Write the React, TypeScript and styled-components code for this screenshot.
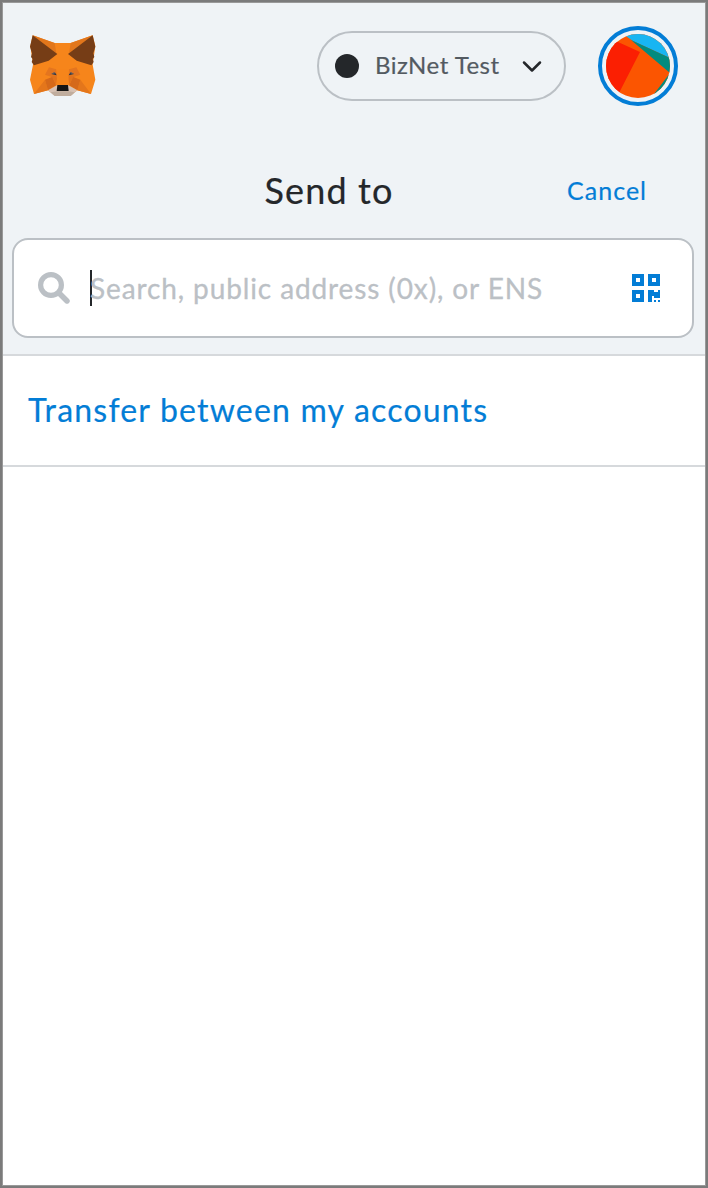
import React from "react";
import styled, { createGlobalStyle } from "styled-components";

const GlobalStyle = createGlobalStyle`
  * { box-sizing: border-box; }
  body { margin: 0; background: #fff; font-family: Lato, "Open Sans", sans-serif; }
  button { font: inherit; background: none; border: 0; padding: 0; margin: 0; cursor: pointer; }
`;

const Popup = styled.div`
  height: 1188px;
  border: 2px solid #7b7b7b;
  background: #fff;
  display: flex;
`;

const Screen = styled.main`
  flex: 1;
  border: 1px solid #999;
  display: flex;
  flex-direction: column;
`;

const Top = styled.header`
  height: 353px;
  background: #eff3f6;
  border-bottom: 2px solid #d6d9dc;
`;

const AppBar = styled.div`
  height: 126px;
  padding: 0 27px 0 17px;
  display: flex;
  align-items: center;
`;

const Logo = styled.svg`
  width: 86px;
  height: 80px;
  margin-right: auto;
`;

const Network = styled.button`
  width: 249px;
  height: 70px;
  border: 2px solid #bbc0c5;
  border-radius: 35px;
  padding: 0 20px 0 16px;
  margin-right: 32px;
  display: flex;
  align-items: center;
  color: #535a61;
  font-size: 24px;
  letter-spacing: 0.5px;
  -webkit-text-stroke: 0.2px;
`;

const NetworkName = styled.span`
  padding-bottom: 3px;
`;

const Dot = styled.span`
  width: 24px;
  height: 24px;
  border-radius: 50%;
  background: #24272a;
  margin-right: 16px;
`;

const Chevron = styled.svg`
  width: 24px;
  height: 24px;
  margin-left: auto;
`;

const Account = styled.button`
  width: 80px;
  height: 80px;
  border: 4px solid #037dd6;
  border-radius: 50%;
  display: grid;
  place-items: center;
`;

const Avatar = styled.svg`
  width: 64px;
  height: 64px;
  border-radius: 50%;
`;

const TitleRow = styled.div`
  height: 109px;
  padding: 11px 58px 0 7px;
  display: grid;
  grid-template-columns: 1fr auto 1fr;
`;

const Title = styled.h1`
  grid-column: 2;
  margin: 0;
  padding-left: 1px;
  font-size: 36px;
  line-height: 100px;
  font-weight: 400;
  color: #24272a;
  letter-spacing: 1.1px;
  white-space: nowrap;
  -webkit-text-stroke: 0.2px;
`;

const Cancel = styled.button`
  justify-self: end;
  font-size: 25px;
  line-height: 100px;
  color: #037dd6;
  letter-spacing: 1px;
  -webkit-text-stroke: 0.2px;
`;

const SearchBox = styled.label`
  height: 100px;
  margin: 0 11px 0 9px;
  padding: 0 32px 0 24px;
  border: 2px solid #bbc0c5;
  border-radius: 16px;
  background: #fff;
  display: flex;
  align-items: center;
`;

const SearchIcon = styled.svg`
  width: 32px;
  height: 32px;
  margin-right: 20px;
`;

const Caret = styled.span`
  width: 2px;
  height: 36px;
  margin-right: -2px;
  background: #24272a;
`;

const Placeholder = styled.span`
  flex: 1;
  padding-bottom: 1px;
  font-size: 28px;
  color: #bbc0c5;
  letter-spacing: 0.89px;
  white-space: nowrap;
  -webkit-text-stroke: 0.3px;
`;

const QrIcon = styled.svg`
  width: 28px;
  height: 28px;
`;

const TransferRow = styled.button`
  height: 111px;
  padding: 0 25px 2px;
  border-bottom: 2px solid #d6d9dc;
  text-align: left;
  font-size: 32px;
  color: #037dd6;
  letter-spacing: 1.2px;
  -webkit-text-stroke: 0.2px;
`;

function Fox() {
  return (
    <Logo viewBox="0 0 258 240" aria-label="MetaMask">
      <path fill="#f6851b" d="M38 28 104 51H152L218 28 226 60 218 116 226 161 213 204 172 193 153 208H103L84 193 42 204 30 161 39 116 31 60Z" />
      <path fill="#e2761b" d="M38 28 104 51 109 82ZM218 28 152 51 147 82Z" />
      <path fill="#763d16" d="M38 28 112 84 86 104 42 118 35 108 38 99 33 93 36 82 30 62ZM218 28 144 84 170 104 214 118 221 108 218 99 223 93 220 82 226 62Z" />
      <path fill="#e4761b" d="M75 161 84 193 42 204ZM181 161 172 193 213 204Z" />
      <path fill="#d5691a" d="M75 161 98 152 108 178 84 193ZM181 161 158 152 148 178 172 193Z" />
      <path fill="#e4751f" d="M87 124 109 130 112 151 75 146ZM169 124 147 130 144 151 181 146Z" />
      <path fill="#e2731c" d="M75 146 112 151 108 177 96 153ZM181 146 144 151 148 177 160 153Z" />
      <path fill="#f6851b" d="M109 130H147L144 177H112Z" />
      <path fill="#233447" d="m94 144 10-6 6 10ZM162 144l-10-6-6 10Z" />
      <path fill="#91776b" d="m94 144 10-6 1 4ZM162 144l-10-6-1 4Z" />
      <path fill="#d7c1b3" d="m84 193 27-15h34l27 15-20 17h-48Z" />
      <path fill="#c0ad9e" d="m92 199 19-3h34l19 3-12 11h-48Z" />
      <path fill="#161616" d="M112 177h32l2 18h-36Z" />
    </Logo>
  );
}

export default function App() {
  return (
    <>
      <GlobalStyle />
      <Popup>
        <Screen>
          <Top>
            <AppBar>
              <Fox />
              <Network>
                <Dot />
                <NetworkName>BizNet Test</NetworkName>
                <Chevron viewBox="0 0 24 24" fill="none" stroke="#24272a" strokeWidth="2.5" strokeLinecap="round" strokeLinejoin="round">
                  <path d="m4 8.5 8 8 8-8" />
                </Chevron>
              </Network>
              <Account aria-label="Account">
                <Avatar viewBox="0 0 64 64">
                  <path fill="#fb5501" d="M0 0h64v64H0z" />
                  <path fill="#18b5f2" d="M17 0h47v24L27 7Z" />
                  <path fill="#028b7e" d="M25 6 64 24v15ZM64 39 45 64h19Z" />
                  <path fill="#fb1f02" d="M0 0 12 8l22 10-21 41L0 64Z" />
                </Avatar>
              </Account>
            </AppBar>
            <TitleRow>
              <Title>Send to</Title>
              <Cancel>Cancel</Cancel>
            </TitleRow>
            <SearchBox>
              <SearchIcon viewBox="0 0 32 32" fill="none" stroke="#bbc0c5">
                <circle cx="13" cy="13" r="10.4" strokeWidth="5.2" />
                <path d="m21 21 8 8" strokeWidth="5.4" strokeLinecap="round" />
              </SearchIcon>
              <Caret />
              <Placeholder>Search, public address (0x), or ENS</Placeholder>
              <QrIcon viewBox="0 0 28 28" fill="#037dd6" fillRule="evenodd" shapeRendering="crispEdges">
                <path d="M0 0h12v12H0zM4 4v4h4V4zM16 0h12v12H16zM20 4v4h4V4zM0 16h12v12H0zM4 20v4h4v-4z" />
                <path d="M16 16h6v2h4v-2h2v8h-6v-2h-2v6h-4zM22 26h2v2h-2zM26 26h2v2h-2z" />
              </QrIcon>
            </SearchBox>
          </Top>
          <TransferRow>Transfer between my accounts</TransferRow>
        </Screen>
      </Popup>
    </>
  );
}
